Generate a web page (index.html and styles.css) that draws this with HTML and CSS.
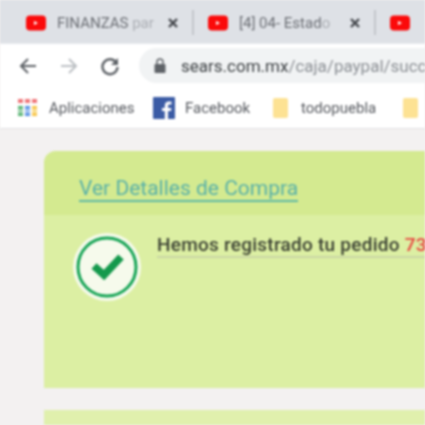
FILE: index.html
```html
<!DOCTYPE html>
<html lang="es">
<head>
    <meta charset="UTF-8">
    <title>Sears - Compra</title>
    <link rel="stylesheet" href="styles.css">
</head>
<body>
    <!-- Pestañas -->
    <div class="tabs">
        <div class="tab">
            <svg class="yt" viewBox="0 0 20 16"><rect width="20" height="15" y="0.5" rx="4" fill="#fb0a0a"/><path d="M8 6l4 2-4 2z" fill="#fff"/></svg>
            <span class="tab-title">FINANZAS <span class="fade">par</span></span>
            <svg class="tab-close" viewBox="0 0 10 10"><path d="M1 1l8 8M9 1l-8 8" stroke="#45484d" stroke-width="2.400"/></svg>
        </div>
        <div class="tab">
            <svg class="yt" viewBox="0 0 20 16"><rect width="20" height="15" y="0.5" rx="4" fill="#fb0a0a"/><path d="M8 6l4 2-4 2z" fill="#fff"/></svg>
            <span class="tab-title">[4] 04- Estad<span class="fade">o</span></span>
            <svg class="tab-close" viewBox="0 0 10 10"><path d="M1 1l8 8M9 1l-8 8" stroke="#45484d" stroke-width="2.400"/></svg>
        </div>
        <div class="tab tab-last">
            <svg class="yt" viewBox="0 0 20 16"><rect width="20" height="15" y="0.5" rx="4" fill="#fb0a0a"/><path d="M8 6l4 2-4 2z" fill="#fff"/></svg>
        </div>
    </div>

    <!-- Barra de direccion -->
    <div class="toolbar">
        <svg class="nav" viewBox="0 0 20 20"><path d="M18 10H3M10 3l-7 7 7 7" fill="none" stroke="#5f6368" stroke-width="2"/></svg>
        <svg class="nav" viewBox="0 0 20 20"><path d="M2 10h15M10 3l7 7-7 7" fill="none" stroke="#bcc0c4" stroke-width="2"/></svg>
        <svg class="nav" viewBox="0 0 20 20"><path d="M16.500 7A7.500 7.500 0 1 0 17.500 11" fill="none" stroke="#5f6368" stroke-width="2.400"/><path d="M18 2v7h-7z" fill="#5f6368"/></svg>
        <div class="address">
            <svg class="lock" viewBox="0 0 12 15"><path d="M3 7V4a3 3 0 0 1 6 0v3" fill="none" stroke="#5f6368" stroke-width="1.500"/><rect x="0.500" y="6" width="11" height="9" rx="1" fill="#5f6368"/></svg>
            <span class="url">sears.com.mx<span class="url-path">/caja/paypal/succ</span></span>
        </div>
    </div>

    <!-- Marcadores -->
    <div class="bookmarks">
        <div class="bookmark apps-mark">
            <div class="apps">
                <i class="r"></i><i class="r"></i><i class="r"></i>
                <i class="g"></i><i class="b"></i><i class="y"></i>
            </div>
            <span>Aplicaciones</span>
        </div>
        <div class="bookmark fb-mark">
            <svg class="fb" viewBox="0 0 22 22"><rect width="22" height="22" rx="1" fill="#3b5ba5"/><path d="M15 22v-8h3l.4-3H15V9c0-1 .4-1.500 1.600-1.500H18.500V4.800C18 4.700 17 4.600 16 4.600c-2.500 0-4.200 1.500-4.200 4.100V11H9v3h2.800v8z" fill="#fff"/></svg>
            <span>Facebook</span>
        </div>
        <div class="bookmark folder-mark">
            <div class="folder"></div>
            <span>todopuebla</span>
        </div>
        <div class="bookmark">
            <div class="folder"></div>
        </div>
    </div>

    <!-- Contenido -->
    <div class="content">
        <div class="card">
            <div class="card-head">
                <a class="details">Ver Detalles de Compra</a>
            </div>
            <div class="card-body">
                <div class="check">
                    <svg viewBox="0 0 68 68">
                        <circle cx="34" cy="34" r="34" fill="#f6faec"/>
                        <circle cx="34" cy="34" r="29" fill="none" stroke="#17a556" stroke-width="3"/>
                        <path d="M21 33l10 9 17-18" fill="none" stroke="#14994c" stroke-width="7.500"/>
                    </svg>
                </div>
                <p class="message">Hemos registrado tu pedido <b>73</b></p>
            </div>
        </div>
        <div class="card card-next"></div>
    </div>
</body>
</html>
```

FILE: styles.css
```css
html, body {
    margin: 0;
    height: 425px;
    overflow: hidden;
}
body {
    width: 425px;
    background-color: #f3f1f1;
    font-family: "Roboto", "Liberation Sans", sans-serif;
    filter: blur(0.8px);
}

/* Pestanas */
.tabs {
    display: flex;
    height: 43px;
    padding-left: 10px;
    overflow: hidden;
    background-color: #dee1e6;
    border-bottom: 1px solid #e8eaee;
}
.tab {
    display: flex;
    align-items: center;
    flex: none;
    box-sizing: border-box;
    width: 182px;
    height: 25px;
    margin-top: 10px;
    padding-left: 14px;
    border-left: 2px solid #c3c6cb;
    font-size: 15px;
    color: #6d7076;
}
.tab:first-child {
    border-left-color: transparent;
}
.tab-last {
    width: 41px;
}
.yt {
    width: 20px;
    height: 16px;
    flex: none;
}
.tab-title {
    margin-left: 11px;
    width: 101px;
    white-space: nowrap;
    overflow: hidden;
}
.fade {
    opacity: 0.45;
}
.tab-close {
    width: 10px;
    height: 10px;
    flex: none;
    margin-left: 10px;
}

/* Barra de direccion */
.toolbar {
    display: flex;
    align-items: center;
    height: 43px;
    padding-left: 18px;
    gap: 21px;
    overflow: hidden;
    background-color: #fff;
}
.nav {
    width: 20px;
    height: 20px;
    flex: none;
}
.address {
    display: flex;
    align-items: center;
    flex: none;
    box-sizing: border-box;
    width: 287px;
    height: 35px;
    margin-left: -2px;
    padding-left: 15px;
    overflow: hidden;
    background-color: #f1f3f4;
    border-radius: 18px 0 0 18px;
}
.lock {
    width: 12px;
    height: 15px;
    flex: none;
}
.url {
    margin-left: 15px;
    font-size: 17px;
    color: #3c4043;
    white-space: nowrap;
}
.url-path {
    color: #8c9095;
}

/* Marcadores */
.bookmarks {
    display: flex;
    align-items: center;
    height: 41px;
    padding-left: 18px;
    overflow: hidden;
    background-color: #fff;
    border-bottom: 1px solid #e2e2e4;
    font-size: 15px;
    color: #55585e;
    white-space: nowrap;
}
.bookmark {
    display: flex;
    align-items: center;
    flex: none;
}
.apps-mark {
    width: 135px;
}
.fb-mark {
    width: 120px;
}
.folder-mark {
    width: 130px;
}
.apps {
    display: grid;
    grid-template-columns: repeat(3, 5px);
    grid-template-rows: 4px 10px;
    gap: 3px 2px;
    margin-right: 12px;
}
.apps .r { background-color: #f0777a; }
.apps .g { background: linear-gradient(#3fa95f, #b5dcc0, #3fa95f); }
.apps .b { background: linear-gradient(#3f7fe0, #b9d2f5, #3f7fe0); }
.apps .y { background: linear-gradient(#f6bb2e, #fbe6a8, #f6bb2e); }
.fb {
    width: 22px;
    height: 22px;
    margin-right: 10px;
}
.folder {
    width: 15px;
    height: 20px;
    margin-right: 13px;
    background-color: #fde293;
    border-radius: 2px;
}

/* Contenido */
.content {
    padding: 22px 0 0 44px;
}
.card {
    width: 381px;
    background-color: #dcefa3;
    border-radius: 12px 0 0 0;
}
.card-head {
    height: 64px;
    box-sizing: border-box;
    padding: 26px 0 0 35px;
    background-color: #d4ea90;
    border-radius: 12px 0 0 0;
}
.details {
    display: inline-block;
    font-size: 21px;
    line-height: 23px;
    color: #58b0a8;
    border-bottom: 2px solid #5db8a5;
}
.card-body {
    display: flex;
    box-sizing: border-box;
    height: 173px;
    padding: 18px 0 0 29px;
}
.check {
    width: 68px;
    height: 68px;
    flex: none;
}
.check svg {
    display: block;
    width: 68px;
    height: 68px;
}
.message {
    margin: 2px 0 0 16px;
    height: 21px;
    font-size: 19px;
    font-weight: 500;
    letter-spacing: 0.25px;
    line-height: 20px;
    color: #3a4032;
    white-space: nowrap;
    border-bottom: 2px solid #c9d6a4;
}
.message b {
    font-weight: 500;
    color: #e8433f;
}
.card-next {
    height: 15px;
    margin-top: 22px;
    background-color: #e0f0ad;
    border-radius: 0;
}
```
